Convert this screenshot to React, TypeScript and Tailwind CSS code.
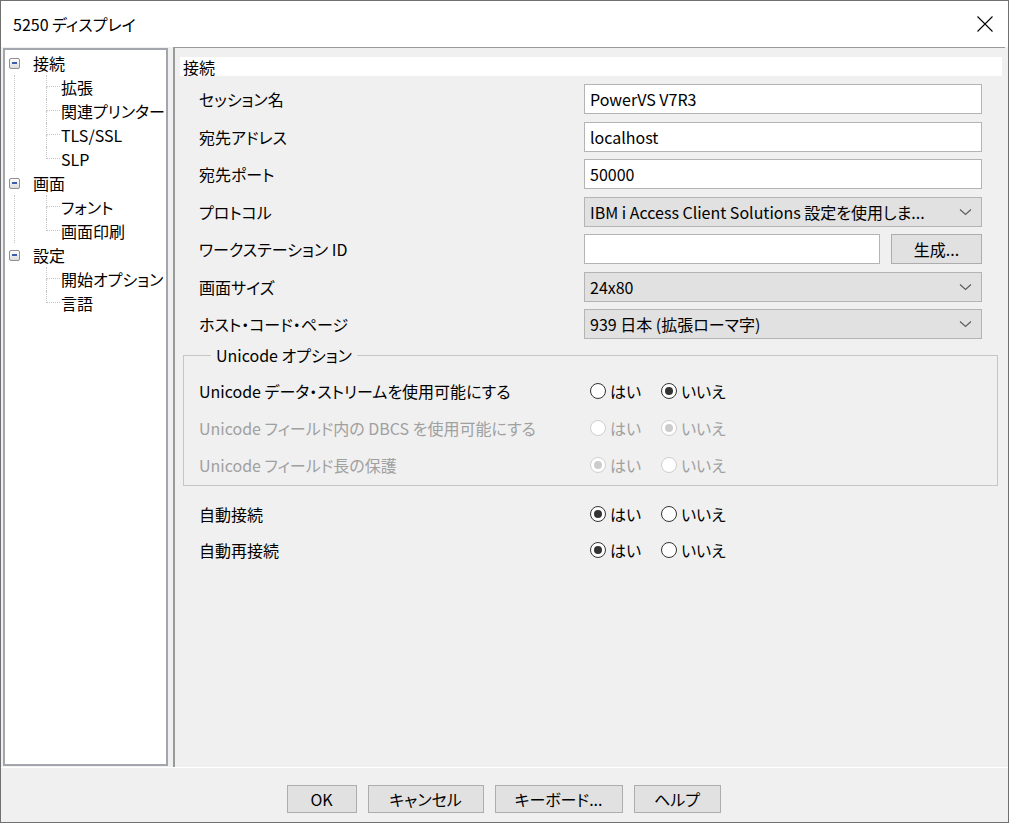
import React from "react";

const Chevron = () => (
  <svg width="13" height="8" viewBox="0 0 13 8" className="shrink-0">
    <path d="M1 1.5 L6.5 6.5 L12 1.5" fill="none" stroke="#5a5a5a" strokeWidth="1.1" />
  </svg>
);

const MinusBox = () => (
  <div className="w-[11px] h-[11px] border border-[#8e8f8f] rounded-[2px] bg-gradient-to-b from-white to-[#dcdcdc] flex items-center justify-center shrink-0">
    <div className="w-[5px] h-[2px] bg-[#3b5ea8]" />
  </div>
);

function TreeChild({ label, last }: { label: string; last?: boolean }) {
  return (
    <div className="flex h-[24px] items-stretch">
      <div className="w-[31px] shrink-0" />
      <div className="w-[14px] shrink-0 flex flex-col">
        <div className="h-1/2 border-l border-b border-dotted border-[#c6c6c6]" />
        <div className={"h-1/2 border-l border-dotted " + (last ? "border-transparent" : "border-[#c6c6c6]")} />
      </div>
      <div className="flex items-center pl-[1px] whitespace-nowrap">{label}</div>
    </div>
  );
}

function TreeRoot({ label, children, last }: { label: string; children: string[]; last?: boolean }) {
  return (
    <div>
      <div className="flex h-[24px] items-center pl-[4px]">
        <MinusBox />
        <span className="ml-[13px]">{label}</span>
      </div>
      <div className={"ml-[9px] border-l border-dotted " + (last ? "border-transparent" : "border-[#c6c6c6]")}>
        {children.map((c, i) => (
          <TreeChild key={c} label={c} last={i === children.length - 1} />
        ))}
      </div>
    </div>
  );
}

function TextInput({ value, className = "" }: { value: string; className?: string }) {
  return (
    <div className={"h-[30px] bg-white border border-[#b4b4b4] flex items-center px-[5px] whitespace-nowrap " + className}>
      {value}
    </div>
  );
}

function Combo({ value }: { value: string }) {
  return (
    <div className="h-[30px] w-full bg-[#e1e1e1] border border-[#b4b4b4] flex items-center pl-[5px] pr-[9px] gap-[6px]">
      <span className="flex-1 whitespace-nowrap">{value}</span>
      <Chevron />
    </div>
  );
}

function Radio({ checked, disabled }: { checked?: boolean; disabled?: boolean }) {
  const border = disabled ? "border-[#cfcfcf]" : "border-[#333333]";
  const dot = disabled ? "bg-[#cccccc]" : "bg-[#333333]";
  return (
    <div className={"w-[16px] h-[16px] rounded-full border bg-white flex items-center justify-center shrink-0 " + border}>
      {checked && <div className={"w-[8px] h-[8px] rounded-full " + dot} />}
    </div>
  );
}

function YesNo({ yes, disabled }: { yes: boolean; disabled?: boolean }) {
  return (
    <div className={"flex items-center pl-[6px] " + (disabled ? "text-[#a0a0a0]" : "")}>
      <div className="flex items-center gap-[4px] w-[71px]">
        <Radio checked={yes} disabled={disabled} />
        <span>はい</span>
      </div>
      <div className="flex items-center gap-[4px]">
        <Radio checked={!yes} disabled={disabled} />
        <span>いいえ</span>
      </div>
    </div>
  );
}

function Row({ label, children, disabled }: { label: string; children: React.ReactNode; disabled?: boolean }) {
  return (
    <div className="flex items-center h-[30px]">
      <div className={"w-[385px] shrink-0 whitespace-nowrap " + (disabled ? "text-[#a0a0a0]" : "")}>{label}</div>
      <div className="flex-1">{children}</div>
    </div>
  );
}

function Btn({ label, w }: { label: string; w: string }) {
  return (
    <div className={"h-[28px] bg-[#e1e1e1] border border-[#adadad] flex items-center justify-center " + w}>
      {label}
    </div>
  );
}

export default function App() {
  return (
    <div className="w-[1009px] h-[823px] bg-[#f0f0f0] border border-[#707070] flex flex-col overflow-hidden text-[16px] leading-[20px] text-black font-['Noto_Sans_CJK_JP','Noto_Sans',sans-serif] [font-feature-settings:'palt']">
      {/* Title bar */}
      <div className="h-[46px] shrink-0 bg-white flex items-center justify-between pl-[12px] pr-[15px]">
        <span className="pb-[1px]">5250 ディスプレイ</span>
        <svg width="16" height="16" viewBox="0 0 16 16">
          <path d="M0.5 0.5 L15.5 15.5 M15.5 0.5 L0.5 15.5" stroke="#000" strokeWidth="1.1" />
        </svg>
      </div>

      {/* Main */}
      <div className="h-[720px] shrink-0 flex pl-[2px] pr-[3px]">
        {/* Tree */}
        <div className="w-[165px] mt-[1px] h-[718px] bg-white border-2 border-[#a3a6ad] pt-[1px]">
          <TreeRoot label="接続" children={["拡張", "関連プリンター", "TLS/SSL", "SLP"]} />
          <TreeRoot label="画面" children={["フォント", "画面印刷"]} />
          <TreeRoot label="設定" children={["開始オプション", "言語"]} last />
        </div>

        {/* Right panel */}
        <div className="ml-[5px] flex-1 border-l-2 border-t border-[#9a9a9a] pt-[9px] pl-[5px] pr-[3px]">
          <div className="h-[19px] bg-white flex items-center pl-[3px]">接続</div>

          <div className="pl-[3px] pr-[4px]">
            <div className="px-[16px] pt-[8px] flex flex-col gap-[7.5px]">
              <Row label="セッション名"><TextInput value="PowerVS V7R3" /></Row>
              <Row label="宛先アドレス"><TextInput value="localhost" /></Row>
              <Row label="宛先ポート"><TextInput value="50000" /></Row>
              <Row label="プロトコル"><Combo value="IBM i Access Client Solutions 設定を使用しま..." /></Row>
              <Row label="ワークステーション ID">
                <div className="flex gap-[11px]">
                  <TextInput value="" className="flex-1" />
                  <div className="w-[91px] h-[30px] bg-[#e1e1e1] border border-[#adadad] flex items-center justify-center">生成...</div>
                </div>
              </Row>
              <Row label="画面サイズ"><Combo value="24x80" /></Row>
              <Row label="ホスト・コード・ページ"><Combo value="939 日本 (拡張ローマ字)" /></Row>
            </div>

            {/* Group box */}
            <fieldset className="mt-[8px] border border-[#c6c6c6] px-[15px] pb-[5px] pt-[13px] flex flex-col gap-[7px]">
              <legend className="ml-[12px] px-[5px] leading-[16px]">Unicode オプション</legend>
              <Row label="Unicode データ・ストリームを使用可能にする"><YesNo yes={false} /></Row>
              <Row label="Unicode フィールド内の DBCS を使用可能にする" disabled><YesNo yes={false} disabled /></Row>
              <Row label="Unicode フィールド長の保護" disabled><YesNo yes={true} disabled /></Row>
            </fieldset>

            <div className="px-[16px] mt-[13px] flex flex-col gap-[6px]">
              <Row label="自動接続"><YesNo yes={true} /></Row>
              <Row label="自動再接続"><YesNo yes={true} /></Row>
            </div>
          </div>
        </div>
      </div>

      {/* Bottom buttons */}
      <div className="flex-1 border-t border-white flex justify-center items-start pt-[17px] gap-[11px] pr-[2px]">
        <Btn label="OK" w="w-[70px]" />
        <Btn label="キャンセル" w="w-[116px]" />
        <Btn label="キーボード..." w="w-[128px]" />
        <Btn label="ヘルプ" w="w-[87px]" />
      </div>
    </div>
  );
}
